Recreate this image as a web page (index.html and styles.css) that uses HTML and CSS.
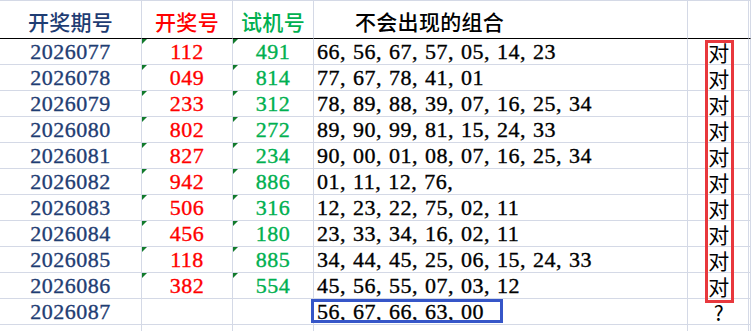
FILE: index.html
```html
<!DOCTYPE html>
<html>
<head>
<meta charset="utf-8">
<link rel="stylesheet" href="styles.css">
</head>
<body>
<div class="sheet">
  <div class="grid">
    <div class="c h blue">开奖期号</div>
    <div class="c h red">开奖号</div>
    <div class="c h green">试机号</div>
    <div class="c h left hcombo">不会出现的组合</div>
    <div class="c h"></div>
    <div class="c h"></div>

    <div class="c blue">2026077</div><div class="c red tri">112</div><div class="c green tri">491</div><div class="c left">66, 56, 67, 57, 05, 14, 23</div><div class="c ok">对</div><div class="c"></div>
    <div class="c blue">2026078</div><div class="c red tri">049</div><div class="c green tri">814</div><div class="c left">77, 67, 78, 41, 01</div><div class="c ok">对</div><div class="c"></div>
    <div class="c blue">2026079</div><div class="c red tri">233</div><div class="c green tri">312</div><div class="c left">78, 89, 88, 39, 07, 16, 25, 34</div><div class="c ok">对</div><div class="c"></div>
    <div class="c blue">2026080</div><div class="c red tri">802</div><div class="c green tri">272</div><div class="c left">89, 90, 99, 81, 15, 24, 33</div><div class="c ok">对</div><div class="c"></div>
    <div class="c blue">2026081</div><div class="c red tri">827</div><div class="c green tri">234</div><div class="c left">90, 00, 01, 08, 07, 16, 25, 34</div><div class="c ok">对</div><div class="c"></div>
    <div class="c blue">2026082</div><div class="c red tri">942</div><div class="c green tri">886</div><div class="c left">01, 11, 12, 76,</div><div class="c ok">对</div><div class="c"></div>
    <div class="c blue">2026083</div><div class="c red tri">506</div><div class="c green tri">316</div><div class="c left">12, 23, 22, 75, 02, 11</div><div class="c ok">对</div><div class="c"></div>
    <div class="c blue">2026084</div><div class="c red tri">456</div><div class="c green tri">180</div><div class="c left">23, 33, 34, 16, 02, 11</div><div class="c ok">对</div><div class="c"></div>
    <div class="c blue">2026085</div><div class="c red tri">118</div><div class="c green tri">885</div><div class="c left">34, 44, 45, 25, 06, 15, 24, 33</div><div class="c ok">对</div><div class="c"></div>
    <div class="c blue">2026086</div><div class="c red tri">382</div><div class="c green tri">554</div><div class="c left">45, 56, 55, 07, 03, 12</div><div class="c ok">对</div><div class="c"></div>
    <div class="c blue">2026087</div><div class="c"></div><div class="c"></div><div class="c left">56, 67, 66, 63, 00</div><div class="c ok">?</div><div class="c"></div>

    <div class="c"></div><div class="c"></div><div class="c"></div><div class="c"></div><div class="c"></div><div class="c"></div>
  </div>
  <div class="mark-red"></div>
  <div class="mark-blue"></div>
</div>
</body>
</html>
```

FILE: styles.css
```css
html, body {
  margin: 0;
  padding: 0;
  background: #ffffff;
}
body {
  width: 751px;
  height: 331px;
  overflow: hidden;
  font-family: "Liberation Serif", "Noto Sans CJK SC", serif;
}
.sheet {
  position: relative;
  width: 751px;
  height: 331px;
}
.grid {
  display: grid;
  grid-template-columns: 142px 91px 81px 374px 61px 1fr;
  grid-template-rows: 38px repeat(11, 26px) 20px;
  border-top: 1px solid #d4d9e6;
}
.c {
  position: relative;
  box-sizing: border-box;
  border-right: 1px solid #d4d9e6;
  border-bottom: 1px solid #d4d9e6;
  display: flex;
  align-items: center;
  justify-content: center;
  font-size: 22px;
  line-height: 24px;
  letter-spacing: 0.5px;
  color: #000;
  white-space: nowrap;
  -webkit-text-stroke: 0.35px currentColor;
}
.h {
  border-bottom: 1px solid #000;
  font-family: "Noto Sans CJK SC", sans-serif;
  font-size: 21px;
  line-height: 26px;
  letter-spacing: 0.3px;
  padding-top: 3px;
  -webkit-text-stroke: 0;
  font-weight: 500;
}
.left {
  justify-content: flex-start;
  padding-left: 3px;
  word-spacing: 1px;
}
.h.hcombo {
  padding-left: 41px;
}
.blue { color: #1f3d73; }
.red { color: #ff0000; }
.green { color: #00b050; }
.ok {
  font-family: "Noto Sans CJK SC", sans-serif;
  font-size: 21px;
  line-height: 22px;
  padding-left: 2px;
  -webkit-text-stroke: 0;
}
.tri::before {
  content: "";
  position: absolute;
  left: 0;
  top: 0;
  border-top: 5px solid #127a2c;
  border-right: 5px solid transparent;
}
.mark-red {
  position: absolute;
  left: 705px;
  top: 40px;
  width: 29px;
  height: 263px;
  box-sizing: border-box;
  border: 3px solid #e8383d;
}
.mark-blue {
  position: absolute;
  left: 311px;
  top: 299px;
  width: 192px;
  height: 24px;
  box-sizing: border-box;
  border: 3px solid #3656c8;
}
```
